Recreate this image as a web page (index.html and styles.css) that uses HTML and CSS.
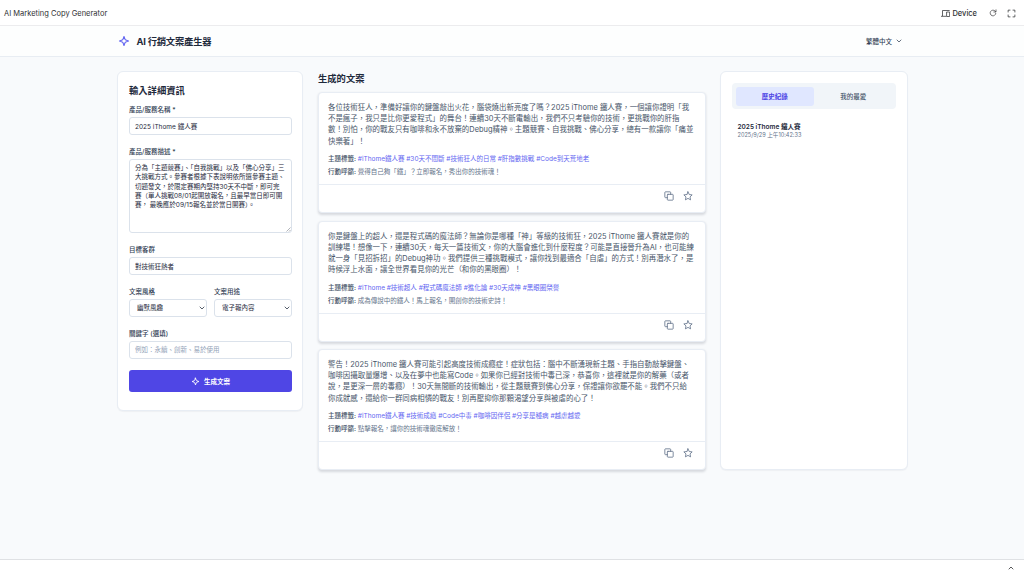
FILE: index.html
```html
<!DOCTYPE html>
<html lang="zh-Hant">
  <head>
    <meta charset="UTF-8" />
    <title>AI Marketing Copy Generator</title>
    <meta name="viewport" content="width=device-width, initial-scale=1.0" />
    <link rel="stylesheet" href="styles.css">
  </head>
  <body>
    <svg class="sprite" aria-hidden="true">
      <symbol id="icon-spark" viewBox="0 0 24 24">
        <path d="M12 3l1.9 5.3a3 3 0 0 0 1.8 1.8L21 12l-5.3 1.9a3 3 0 0 0-1.8 1.8L12 21l-1.9-5.3a3 3 0 0 0-1.800-1.800L3 12l5.300-1.900a3 3 0 0 0 1.800-1.800z" />
      </symbol>
      <symbol id="icon-chevron" viewBox="0 0 24 24">
        <path d="M4 8l8 8 8-8" />
      </symbol>
      <symbol id="icon-copy" viewBox="0 0 24 24">
        <rect x="8" y="8" width="14" height="14" rx="1.5" />
        <path d="M16 8V3.500A1.500 1.500 0 0 0 14.500 2h-11A1.500 1.500 0 0 0 2 3.500v11A1.500 1.500 0 0 0 3.500 16H8" />
      </symbol>
      <symbol id="icon-star" viewBox="0 0 24 24">
        <path d="M12 2l3 6.500 7 .8-5.200 4.900 1.400 7-6.200-3.500-6.200 3.500 1.400-7L2 9.300l7-.8z" />
      </symbol>
    </svg>

    <div class="topbar">
      <span class="topbar-title">AI Marketing Copy Generator</span>
      <div class="topbar-tools">
        <svg class="icon icon-device" viewBox="0 0 24 24"><path d="M22 4H4v14M1 19.500h12M16 8h7v12h-7z" /></svg>
        <span class="device-label">Device</span>
        <svg class="icon icon-reload" viewBox="0 0 24 24"><path d="M20.500 13a8.500 8.500 0 1 1-2.500-7L20 8M21 2.500V9h-6.500" /></svg>
        <svg class="icon icon-full" viewBox="0 0 24 24"><path d="M3 8V3h5M16 3h5v5M21 16v5h-5M8 21H3v-5" /></svg>
      </div>
    </div>

    <header class="header">
      <div class="brand">
        <svg class="icon brand-icon"><use href="#icon-spark" /></svg>
        <h1>AI 行銷文案產生器</h1>
      </div>
      <div class="language">
        <span>繁體中文</span>
        <svg class="icon"><use href="#icon-chevron" /></svg>
      </div>
    </header>

    <main class="layout">
      <form class="panel form">
        <h2>輸入詳細資訊</h2>
        <label for="product">產品/服務名稱 *</label>
        <input type="text" id="product" value="2025 iThome 鐵人賽" />
        <label for="desc">產品/服務描述 *</label>
        <div class="textarea">
          <textarea id="desc" spellcheck="false">分為「主題競賽」、「自我挑戰」以及「佛心分享」三
大挑戰方式。參賽者根據下表說明依所選參賽主題、
切題發文，於限定賽期內堅持30天不中斷，即可完
賽（單人挑戰08/01起開放報名，且最早當日即可開
賽， 最晚應於09/15報名並於當日開賽）。</textarea>
          <svg class="grip" viewBox="0 0 5 5"><path d="M0.500 4.500l4-4M3 4.500l1.500-1.500" /></svg>
        </div>
        <label for="audience">目標客群</label>
        <input type="text" id="audience" value="對技術狂熱者" />
        <div class="form-row">
          <div>
            <label for="tone">文案風格</label>
            <div class="select">
              <select id="tone"><option>幽默風趣</option></select>
              <svg class="icon"><use href="#icon-chevron" /></svg>
            </div>
          </div>
          <div>
            <label for="usage">文案用途</label>
            <div class="select">
              <select id="usage"><option>電子報內容</option></select>
              <svg class="icon"><use href="#icon-chevron" /></svg>
            </div>
          </div>
        </div>
        <label for="keywords">關鍵字 (選填)</label>
        <input type="text" id="keywords" placeholder="例如：永續、創新、易於使用" />
        <button type="button" class="generate">
          <svg class="icon"><use href="#icon-spark" /></svg>
          <span>生成文案</span>
        </button>
      </form>

      <section class="results">
        <h2>生成的文案</h2>
        <article class="copy-card">
          <div class="copy-body">
            <p class="copy-text">各位技術狂人，準備好讓你的鍵盤敲出火花，腦袋燒出新亮度了嗎？2025 iThome 鐵人賽，一個讓你證明「我<br>不是瘋子，我只是比你更愛程式」的舞台！連續30天不斷電輸出，我們不只考驗你的技術，更挑戰你的肝指<br>數！別怕，你的戰友只有咖啡和永不放棄的Debug精神。主題競賽、自我挑戰、佛心分享，總有一款讓你「痛並<br>快樂著」！</p>
            <p class="meta"><b>主題標籤:</b> <span class="tags">#iThome鐵人賽 #30天不間斷 #技術狂人的日常 #肝指數挑戰 #Code到天荒地老</span></p>
            <p class="meta"><b>行動呼籲:</b> 覺得自己夠「鐵」？立即報名，秀出你的技術魂！</p>
          </div>
          <div class="copy-actions">
            <svg class="icon"><use href="#icon-copy" /></svg>
            <svg class="icon"><use href="#icon-star" /></svg>
          </div>
        </article>
        <article class="copy-card">
          <div class="copy-body">
            <p class="copy-text">你是鍵盤上的超人，還是程式碼的魔法師？無論你是哪種「神」等級的技術狂，2025 iThome 鐵人賽就是你的<br>訓練場！想像一下，連續30天，每天一篇技術文，你的大腦會進化到什麼程度？可能是直接晉升為AI，也可能練<br>就一身「見招拆招」的Debug神功。我們提供三種挑戰模式，讓你找到最適合「自虐」的方式！別再潛水了，是<br>時候浮上水面，讓全世界看見你的光芒（和你的黑眼圈）！</p>
            <p class="meta"><b>主題標籤:</b> <span class="tags">#iThome #技術超人 #程式碼魔法師 #進化論 #30天成神 #黑眼圈榮譽</span></p>
            <p class="meta"><b>行動呼籲:</b> 成為傳說中的鐵人！馬上報名，開創你的技術史詩！</p>
          </div>
          <div class="copy-actions">
            <svg class="icon"><use href="#icon-copy" /></svg>
            <svg class="icon"><use href="#icon-star" /></svg>
          </div>
        </article>
        <article class="copy-card">
          <div class="copy-body">
            <p class="copy-text">警告！2025 iThome 鐵人賽可能引起高度技術成癮症！症狀包括：腦中不斷湧現新主題、手指自動敲擊鍵盤、<br>咖啡因攝取量爆增、以及在夢中也能寫Code。如果你已經對技術中毒已深，恭喜你，這裡就是你的解藥（或者<br>說，是更深一層的毒癮）！30天無間斷的技術輸出，從主題競賽到佛心分享，保證讓你欲罷不能。我們不只給<br>你成就感，還給你一群同病相憐的戰友！別再壓抑你那顆渴望分享與被虐的心了！</p>
            <p class="meta"><b>主題標籤:</b> <span class="tags">#iThome鐵人賽 #技術成癮 #Code中毒 #咖啡因伴侶 #分享是種病 #越虐越愛</span></p>
            <p class="meta"><b>行動呼籲:</b> 點擊報名，讓你的技術魂徹底解放！</p>
          </div>
          <div class="copy-actions">
            <svg class="icon"><use href="#icon-copy" /></svg>
            <svg class="icon"><use href="#icon-star" /></svg>
          </div>
        </article>
      </section>

      <aside class="panel history">
        <div class="tabs">
          <div class="tab active">歷史紀錄</div>
          <div class="tab">我的最愛</div>
        </div>
        <div class="history-item">
          <p class="history-name">2025 iThome 鐵人賽</p>
          <p class="history-date">2025/9/29 上午10:42:33</p>
        </div>
      </aside>
    </main>

    <footer class="console">
      <svg class="icon"><use href="#icon-chevron" /></svg>
    </footer>
  </body>
</html>
```
FILE: styles.css
```css
* {
  box-sizing: border-box;
}

body {
  margin: 0;
  height: 576px;
  display: flex;
  flex-direction: column;
  overflow: hidden;
  background: #f8fafc;
  color: #1e293b;
  font-family: Inter, "Noto Sans CJK TC", sans-serif;
  font-size: 6.5px;
}

h1,
h2,
p {
  margin: 0;
}

.sprite {
  display: none;
}

.icon {
  display: block;
  flex: none;
  width: 9px;
  height: 9px;
  fill: none;
  stroke: currentColor;
  stroke-width: 2;
  stroke-linecap: round;
  stroke-linejoin: round;
}

.topbar {
  flex: none;
  display: flex;
  align-items: center;
  justify-content: space-between;
  height: 26px;
  padding: 1px 8px 0 4px;
  background: #fff;
  border-bottom: 1px solid #ececee;
  color: #303134;
  font-size: 7.5px;
}

.topbar-tools {
  display: flex;
  align-items: center;
}

.device-label {
  margin: 0 12px 0 2.500px;
  font-weight: 500;
}

.icon-reload {
  width: 8px;
  height: 8px;
  margin-right: 10px;
}

.icon-full {
  width: 9px;
  height: 9px;
}

.header {
  flex: none;
  display: flex;
  align-items: center;
  justify-content: space-between;
  height: 31px;
  padding: 0 122px 0 118px;
  background: #fdfefe;
  border-bottom: 1px solid #e8edf3;
}

.brand {
  display: flex;
  align-items: center;
  gap: 6.500px;
}

.brand h1 {
  font-size: 9.300px;
  line-height: 14px;
  font-weight: 700;
  letter-spacing: -0.2px;
  margin-top: 1px;
}

.brand-icon {
  width: 12px;
  height: 12px;
  color: #6366f1;
  stroke-width: 2.300;
}

.language {
  display: flex;
  align-items: center;
  gap: 4px;
  color: #334155;
  font-weight: 500;
}

.language .icon {
  width: 6px;
  height: 6px;
  stroke-width: 3;
}

.layout {
  flex: 1;
  display: grid;
  grid-template-columns: 186px 388px 187px;
  gap: 15px;
  align-items: start;
  padding: 14px 0 0 117px;
}

.panel {
  background: #fff;
  border: 1px solid #e8edf4;
  border-radius: 6px;
  box-shadow: 0 1px 1px rgba(15, 23, 42, 0.04);
}

.form {
  height: 340px;
  padding: 11px 10px 11px 11px;
}

h2 {
  font-size: 9.300px;
  line-height: 15px;
  font-weight: 700;
}

.form label {
  display: block;
  height: 9px;
  line-height: 11px;
  margin-bottom: 3px;
  color: #334155;
  font-weight: 500;
}

.form h2 {
  margin-bottom: 7px;
}

.form input,
.form textarea,
.form select {
  display: block;
  width: 100%;
  height: 18px;
  margin: 0 0 12px;
  padding: 0 5px;
  border: 1px solid #dbe2eb;
  border-radius: 3px;
  background: #fff;
  color: #1e293b;
  font-family: inherit;
  font-size: 6.500px;
  outline: none;
}

.textarea {
  position: relative;
}

.form textarea {
  height: 74px;
  padding: 4px 5px;
  line-height: 9.300px;
  white-space: pre;
  overflow: hidden;
  resize: none;
}

.grip {
  position: absolute;
  right: 1px;
  bottom: 1px;
  width: 5px;
  height: 5px;
  fill: none;
  stroke: #7c828b;
  stroke-width: 0.600;
}

.form input::placeholder {
  color: #94a3b8;
}

.form-row {
  display: grid;
  grid-template-columns: 1fr 1fr;
  gap: 7px;
}

.select {
  display: grid;
  align-items: start;
}

.select > * {
  grid-area: 1 / 1;
}

.form .select select {
  appearance: none;
  padding: 0 7px;
}

.select .icon {
  justify-self: end;
  width: 6px;
  height: 6px;
  margin: 6px 2px 0 0;
  stroke-width: 3;
}

.form #keywords {
  margin-bottom: 11px;
}

.generate {
  display: flex;
  align-items: center;
  justify-content: center;
  gap: 4px;
  width: 100%;
  height: 22px;
  padding: 0;
  border: 0;
  border-radius: 3px;
  background: #4f46e5;
  color: #fff;
  font-family: inherit;
  font-size: 6.500px;
  font-weight: 600;
}

.generate .icon {
  stroke-width: 2.500;
}

.results h2 {
  margin-bottom: 6px;
}

.copy-card {
  width: 387.500px;
  height: 121px;
  margin-bottom: 7.500px;
  background: #fff;
  border: 1px solid #e8edf4;
  border-radius: 4px;
  box-shadow: 0 1.500px 2.500px rgba(15, 23, 42, 0.14);
}

.copy-body {
  height: 92px;
  padding: 9px 9px 0;
  white-space: nowrap;
  border-bottom: 1px solid #e8edf4;
}

.copy-text {
  margin-bottom: 7.500px;
  color: #475569;
  font-size: 7.450px;
  line-height: 11.200px;
}

.meta {
  height: 13px;
  line-height: 11px;
  color: #64748b;
}

.meta b {
  color: #475569;
  font-weight: 500;
}

.tags {
  color: #6366f1;
}

.copy-actions {
  display: flex;
  justify-content: flex-end;
  gap: 9px;
  padding: 6px 12px;
  color: #64748b;
}

.copy-actions .icon {
  width: 10px;
  height: 10px;
}

.history {
  height: 399px;
  margin-left: -1px;
  padding: 11px;
}

.tabs {
  display: grid;
  grid-template-columns: 1fr 1fr;
  height: 26px;
  padding: 3.500px;
  border-radius: 4px;
  background: #f1f5f9;
}

.tab {
  display: flex;
  align-items: center;
  justify-content: center;
  border-radius: 3px;
  color: #475569;
  font-weight: 500;
}

.tab.active {
  background: #e0e7ff;
  color: #4f46e5;
  font-weight: 600;
}

.history-item {
  padding: 14px 5.500px;
}

.history-name {
  line-height: 9.300px;
  font-weight: 600;
}

.history-date {
  color: #64748b;
  font-size: 5.600px;
  line-height: 7.500px;
}

.console {
  flex: none;
  display: flex;
  align-items: center;
  justify-content: flex-end;
  height: 17px;
  padding-right: 10px;
  background: #fff;
  border-top: 1px solid #dfe1e4;
  color: #202124;
}

.console .icon {
  width: 6px;
  height: 6px;
  stroke-width: 3;
  transform: rotate(180deg);
}
```
